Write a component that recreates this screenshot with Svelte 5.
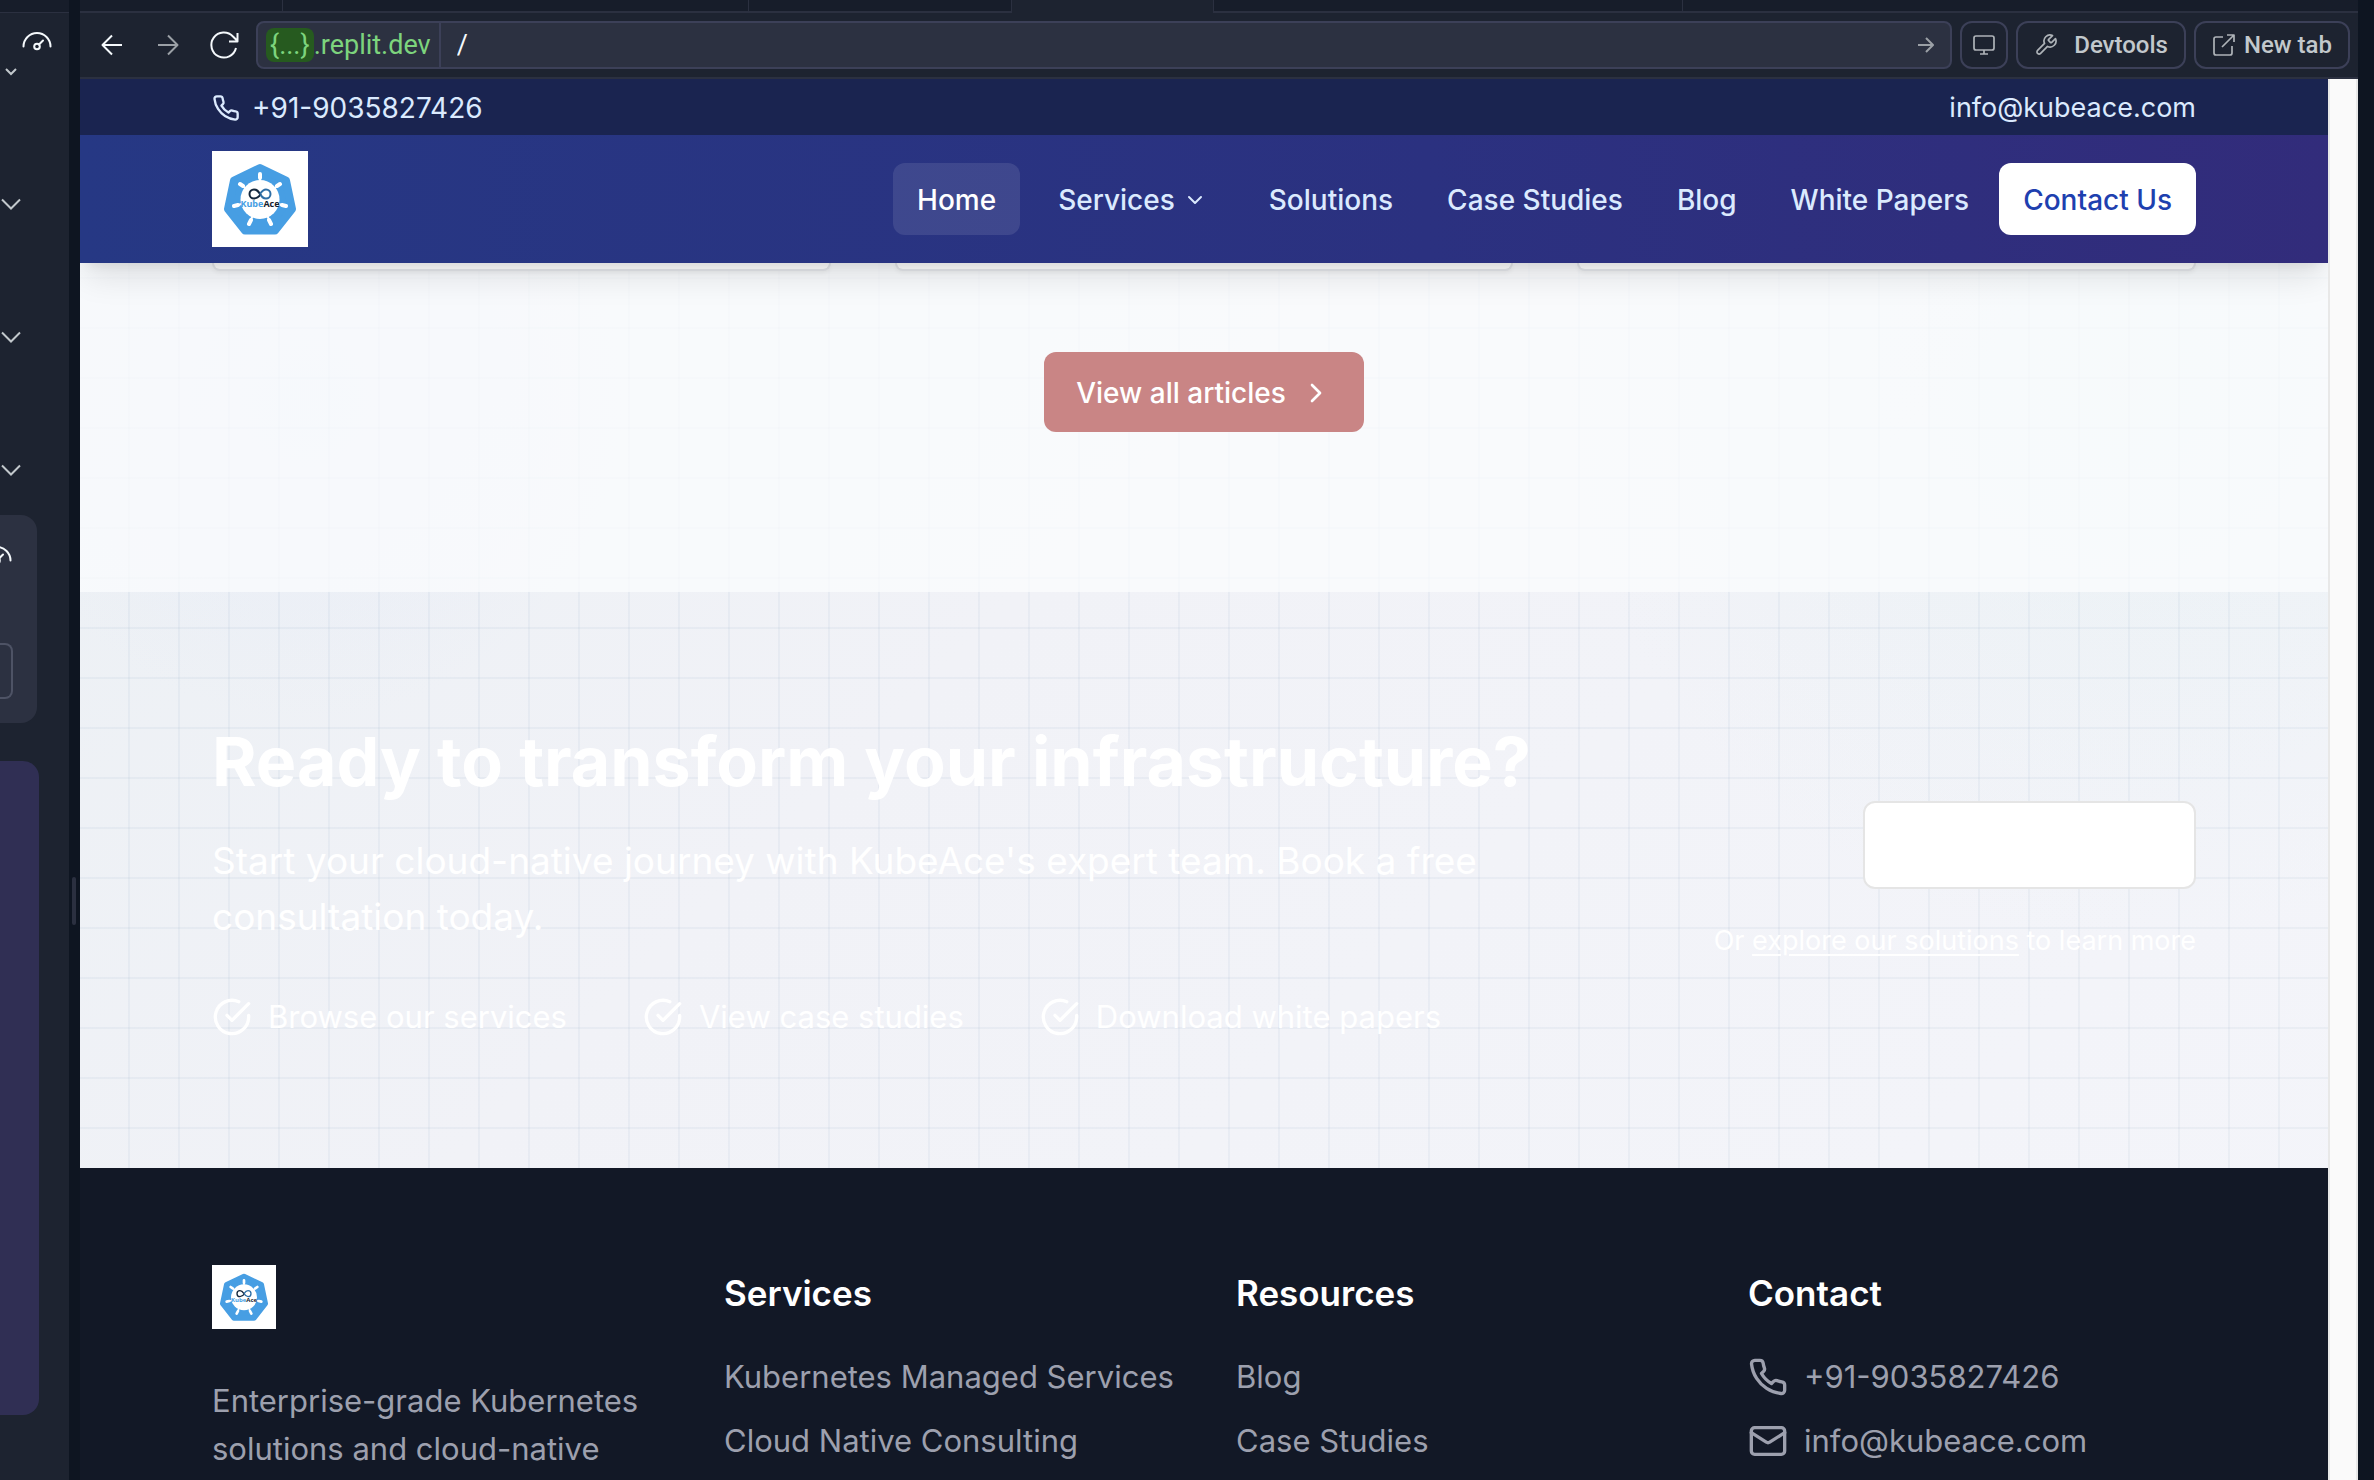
<script>
  const articleCards = ['first', 'second', 'third'];
  const benefits = ['Browse our services', 'View case studies', 'Download white papers'];
  const serviceLinks = ['Kubernetes Managed Services', 'Cloud Native Consulting'];
  const resourceLinks = ['Blog', 'Case Studies'];
</script>

{#snippet logo()}
  <svg viewBox="0 0 96 96" role="img" aria-label="KubeAce">
    <rect width="96" height="96" fill="#fff" />
    <path d="M48 17 74 29.500 80 58 63 79.500H33L16 58 22 29.500Z" fill="#479ee3" stroke="#479ee3" stroke-width="8" stroke-linejoin="round" />
    <g stroke="#fff" stroke-width="2" stroke-linecap="round">
      <path d="M48 48V24M48 48 66 34.500M48 48 72 54.500M48 48 58 71M48 48 38 71M48 48 24 54.500M48 48 30 34.500" />
      <path d="M48 23v4M68 33l-3 2M74 55l-4-1M59 73l-2-4M37 73l2-4M22 55l4-1M28 33l3 2" stroke-width="4" />
    </g>
    <circle cx="48" cy="48.500" r="19.500" fill="#fff" />
    <path d="M49 43c-3 4-5 4.500-7 4.500a4.500 4.500 0 0 1 0-9c3 0 4 1.500 6 4.500" fill="none" stroke="#14273d" stroke-width="2" />
    <path d="M48 43c2 3 3 4.500 6 4.500a4.500 4.500 0 0 0 0-9c-2.500 0-4 1.500-6 4.500" fill="none" stroke="#2f6fa6" stroke-width="2" />
    <text x="48" y="55.500" text-anchor="middle" font-size="9" font-weight="700" font-family="'Open Sans', sans-serif"><tspan fill="#479ee3">Kube</tspan><tspan fill="#14202c">Ace</tspan></text>
  </svg>
{/snippet}

{#snippet phone()}
  <svg viewBox="0 0 24 24" class="stroke" aria-hidden="true"><path d="M22 16.920v3a2 2 0 0 1-2.180 2 19.790 19.790 0 0 1-8.630-3.070 19.500 19.500 0 0 1-6-6 19.790 19.790 0 0 1-3.070-8.670A2 2 0 0 1 4.110 2h3a2 2 0 0 1 2 1.720 12.840 12.840 0 0 0 .7 2.810 2 2 0 0 1-.45 2.110L8.090 9.910a16 16 0 0 0 6 6l1.270-1.270a2 2 0 0 1 2.110-.45 12.840 12.840 0 0 0 2.810.7A2 2 0 0 1 22 16.920z" /></svg>
{/snippet}

{#snippet gauge()}
  <svg viewBox="0 0 30 20" class="gauge" aria-hidden="true"><path d="M1.500 14.500a13.500 13.500 0 0 1 27 0M17 12.500 21 8.500" /><circle cx="15" cy="14.500" r="2.800" /></svg>
{/snippet}

{#snippet chevron()}
  <svg viewBox="0 0 20 12" class="chev" aria-hidden="true"><path d="m2 1.500 9 9 9-9" /></svg>
{/snippet}

<div class="workspace">
  <aside class="sidebar" aria-label="Assistant panel">
    <div class="side-top"></div>
    <div class="side-usage">{@render gauge()}</div>
    <button class="mini" aria-label="More"><svg viewBox="0 0 12 8" aria-hidden="true"><path d="m1 1 5 5 5-5" /></svg></button>
    <div class="side-steps">
      <button aria-label="Expand step one">{@render chevron()}</button>
      <button aria-label="Expand step two">{@render chevron()}</button>
      <button aria-label="Expand step three">{@render chevron()}</button>
    </div>
    <div class="side-card">
      <div class="side-card-icon">{@render gauge()}</div>
      <button aria-label="Preview"></button>
    </div>
    <div class="side-message"></div>
  </aside>
  <div class="gutter"><span class="handle"></span></div>

  <main class="pane">
    <div class="tabs"><span class="t1"></span><span class="t2"></span><span class="t3"></span><span class="t4 active"></span><span class="t5"></span><span class="rest"></span></div>
    <div class="browser">
      <button class="nav-btn" aria-label="Back"><svg viewBox="0 0 24 24" aria-hidden="true"><path d="M22 12H2.500M12 2.500 2.500 12 12 21.500" /></svg></button>
      <button class="nav-btn dim" aria-label="Forward"><svg viewBox="0 0 24 24" aria-hidden="true"><path d="M2 12h19.500M12 2.500 21.500 12 12 21.500" /></svg></button>
      <button class="nav-btn reload" aria-label="Reload"><svg viewBox="0 0 32 32" aria-hidden="true"><path d="M28 19a12.500 12.500 0 1 1-3-11.500l4.500 4.500M29.500 4v8.500H21" /></svg></button>
      <div class="url">
        <span class="host"><span class="pill">{'{...}'}</span>.replit.dev</span>
        <input aria-label="Path" value="/" />
        <button aria-label="Go"><svg viewBox="0 0 16 16" aria-hidden="true"><path d="M0 8h15M8 1l7 7-7 7" /></svg></button>
      </div>
      <button class="tool square" aria-label="Device size"><svg viewBox="0 0 24 24" aria-hidden="true"><rect x="2" y="3" width="20" height="14" rx="2" /><path d="M12 17v4M8 21h8" /></svg></button>
      <button class="tool dev"><svg viewBox="0 0 24 24" aria-hidden="true"><path d="M14.700 6.300a1 1 0 0 0 0 1.400l1.600 1.600a1 1 0 0 0 1.400 0l3.770-3.770a6 6 0 0 1-7.940 7.940l-6.910 6.910a2.120 2.120 0 0 1-3-3l6.910-6.910a6 6 0 0 1 7.940-7.940l-3.760 3.760z" /></svg>Devtools</button>
      <button class="tool newtab"><svg viewBox="0 0 24 24" aria-hidden="true"><path d="M20 13v7a2 2 0 0 1-2 2H4a2 2 0 0 1-2-2V6a2 2 0 0 1 2-2h7M15 2h7v7M22 2 10 14" /></svg>New tab</button>
    </div>

    <div class="frame">
      <div class="site">
        <header>
          <div class="topbar">
            <a href="#phone">{@render phone()}+91-9035827426</a>
            <a class="mail" href="#mail">info@kubeace.com</a>
          </div>
          <div class="navbar">
            <a class="brand" href="#home">{@render logo()}</a>
            <nav aria-label="Main">
              <a class="current" href="#home">Home</a>
              <button class="menu">Services<svg viewBox="0 0 24 24" class="stroke" aria-hidden="true"><path d="m6 9 6 6 6-6" /></svg></button>
              <a href="#solutions">Solutions</a>
              <a href="#case-studies">Case Studies</a>
              <a href="#blog">Blog</a>
              <a href="#white-papers">White Papers</a>
            </nav>
            <a class="contact" href="#contact">Contact Us</a>
          </div>
        </header>

        <section class="articles">
          <div class="cards">
            {#each articleCards as card (card)}<div class="card"></div>{/each}
          </div>
          <button class="view-all">View all articles<svg viewBox="0 0 24 24" class="stroke" aria-hidden="true"><path d="m9 18 6-6-6-6" /></svg></button>
        </section>

        <section class="cta">
          <div class="pitch">
            <h2>Ready to transform your infrastructure?</h2>
            <p>Start your cloud-native journey with KubeAce's expert team. Book a free consultation today.</p>
            <ul>
              {#each benefits as benefit (benefit)}
                <li><svg viewBox="0 0 24 24" class="stroke" aria-hidden="true"><path d="M22 11.080V12a10 10 0 1 1-5.930-9.140" /><path d="m9 11 3 3L22 4" /></svg>{benefit}</li>
              {/each}
            </ul>
          </div>
          <div class="action">
            <button aria-label="Book a free consultation"></button>
            <p>Or <a href="#solutions">explore our solutions</a> to learn more</p>
          </div>
        </section>

        <footer>
          <div>
            <a class="foot-logo" href="#home">{@render logo()}</a>
            <p>Enterprise-grade Kubernetes solutions and cloud-native</p>
          </div>
          <div>
            <h3>Services</h3>
            <ul>{#each serviceLinks as link (link)}<li><a href="#services">{link}</a></li>{/each}</ul>
          </div>
          <div>
            <h3>Resources</h3>
            <ul>{#each resourceLinks as link (link)}<li><a href="#resources">{link}</a></li>{/each}</ul>
          </div>
          <div>
            <h3>Contact</h3>
            <ul>
              <li><a href="#phone">{@render phone()}+91-9035827426</a></li>
              <li><a href="#mail"><svg viewBox="0 0 24 24" class="stroke" aria-hidden="true"><rect x="2" y="4" width="20" height="16" rx="2" /><path d="m22 7-8.970 5.700a1.940 1.940 0 0 1-2.060 0L2 7" /></svg>info@kubeace.com</a></li>
            </ul>
          </div>
        </footer>
      </div>
      <div class="scrollbar"></div>
    </div>
  </main>
  <div class="gutter"></div>
</div>

<style>
  :global(body) { background: #0e1521; }
  .workspace, .workspace * { box-sizing: border-box; }
  .workspace {
    display: grid;
    grid-template-columns: 69px 11px minmax(0, 1fr) 16px;
    height: 100vh;
    overflow: hidden;
    background: #0e1521;
    font-family: Inter, "Liberation Sans", sans-serif;
  }
  button, input { font: inherit; color: inherit; border: 0; background: none; padding: 0; margin: 0; }
  a { color: inherit; text-decoration: none; }
  ul { list-style: none; margin: 0; padding: 0; }
  h2, h3, p { margin: 0; }
  svg { display: block; fill: none; stroke: none; flex: none; }
  .stroke { stroke: currentColor; stroke-width: 2; stroke-linecap: round; stroke-linejoin: round; }

  /* sidebar */
  .sidebar { display: flex; flex-direction: column; overflow: hidden; background: #1d2330; color: #c2c8cc; }
  .side-top { height: 13px; flex: none; background: #171d2a; border-bottom: 1px solid #2b3040; }
  .side-usage { display: flex; justify-content: flex-end; padding: 19px 17px 0 0; }
  .gauge { width: 30px; height: 20px; stroke: #f5f9fc; stroke-width: 2; stroke-linecap: round; }
  .mini { width: 12px; height: 8px; margin: 16px 0 0 5px; }
  .mini svg { width: 12px; height: 8px; stroke: currentColor; stroke-width: 2; }
  .side-steps { display: flex; flex-direction: column; gap: 121px; padding-top: 122px; }
  .side-steps button { width: 22px; height: 12px; }
  .chev { width: 20px; height: 12px; stroke: currentColor; stroke-width: 2; overflow: visible; }
  .side-card { width: 37px; height: 208px; margin-top: 39px; flex: none; border-radius: 0 16px 16px 0; background: #2c3141; padding-top: 31px; }
  .side-card-icon { display: flex; justify-content: flex-end; width: 12px; }
  .side-card button { display: block; width: 13px; height: 56px; margin-top: 77px; border: 2px solid #4e5365; border-left: 0; border-radius: 0 8px 8px 0; }
  .side-message { width: 39px; height: 654px; margin-top: 38px; flex: none; border-radius: 0 16px 16px 0; background: #302f54; }
  .gutter { display: flex; align-items: center; padding: 322px 0 0 3px; }
  .handle { width: 4px; height: 48px; border-radius: 2px; background: #2b3040; }

  /* browser chrome */
  .pane { display: flex; flex-direction: column; min-width: 0; min-height: 0; }
  .tabs { display: flex; height: 13px; flex: none; background: #171d2a; }
  .tabs span { border: solid #2b3040; border-width: 0 1px 2px 0; }
  .tabs .t1 { width: 203px; }
  .tabs .t2 { width: 466px; }
  .tabs .t3 { width: 263px; }
  .tabs .t4 { width: 202px; }
  .tabs .t5 { width: 469px; }
  .tabs .active { background: #1d2330; border-bottom: 0; }
  .tabs .rest { flex: 1; border-right: 0; }
  .browser {
    display: flex; align-items: center; gap: 8px; height: 66px; flex: none; padding: 0 8px 0 0;
    background: #1d2330; border-bottom: 2px solid #2b3040;
    font-family: Roboto, "Liberation Sans", sans-serif; font-size: 24px; line-height: 32px; color: #c2c8cc;
  }
  .nav-btn { display: grid; place-items: center; width: 48px; height: 48px; margin-left: 8px; color: #f5f9fc; }
  .browser svg { stroke: currentColor; stroke-width: 2; stroke-linejoin: round; }
  .nav-btn svg { width: 24px; height: 24px; }
  .nav-btn.dim { color: #9ba0a6; margin-left: 0; }
  .nav-btn.reload { margin-left: 0; }
  .nav-btn.reload svg { width: 32px; height: 32px; }
  .url { display: flex; align-items: center; flex: 1; min-width: 0; height: 48px; border: 2px solid #3c4058; border-radius: 8px; background: #2c3141; font-size: 27px; }
  .host { display: flex; align-items: center; height: 44px; padding: 0 8px; border-right: 2px solid #3c4058; color: #7dd47d; }
  .pill { padding: 1px 4px; border-radius: 8px; background: #265a1f; }
  .url input { flex: 1; min-width: 0; padding-left: 16px; color: #f5f9fc; outline: 0; }
  .url button { padding: 0 16px; color: #9ba0a6; }
  .url button svg { width: 16px; height: 16px; }
  .tool { display: flex; align-items: center; justify-content: center; height: 48px; padding: 0 16px; border: 2px solid #3c4058; border-radius: 12px; font-weight: 500; }
  .browser .tool svg { width: 24px; height: 24px; stroke: #aeb3b8; stroke-width: 1.7; }
  .tool.square { width: 48px; padding: 0; }
  .tool.dev { gap: 16px; }
  .tool.newtab { gap: 8px; }

  /* site */
  .frame { display: flex; flex: 1; min-height: 0; overflow: hidden; }
  .scrollbar { width: 30px; flex: none; background: #fafafa; border: solid #e8e8e8; border-width: 0 2px; }
  .site {
    flex: 1; min-width: 0; overflow: hidden;
    background:
      linear-gradient(90deg, transparent 48px, rgb(120 150 180 / 8%) 48px) 0 0 / 50px 50px,
      linear-gradient(transparent 48px, rgb(120 150 180 / 8%) 48px) 0 0 / 50px 50px,
      radial-gradient(circle 560px at 91% 300px, rgb(216 236 236 / 30%), transparent),
      radial-gradient(circle 320px at 10% 320px, rgb(220 228 250 / 30%), transparent),
      linear-gradient(135deg, #ebf0f4, #f1f2f7 40%, #f4f5fa);
  }
  header { position: relative; z-index: 1; box-shadow: 0 20px 30px -6px rgb(0 0 0 / 10%), 0 8px 12px -8px rgb(0 0 0 / 10%); }
  .topbar, .navbar { display: flex; align-items: center; padding: 0 132px; font-size: 28px; line-height: 40px; color: #dbeafe; }
  .topbar { justify-content: space-between; height: 56px; padding-top: 2px; background: #1a2450; }
  .topbar a { display: flex; align-items: center; gap: 12px; }
  .topbar .mail { font-size: 27px; }
  .topbar svg { width: 28px; height: 28px; }
  .navbar { height: 128px; background: linear-gradient(90deg, #263884, #2b3180 60%, #322c7b); font-weight: 500; }
  .brand { width: 96px; margin-right: auto; }
  nav { display: flex; gap: 6px; margin-right: 6px; }
  nav a, nav button, .contact { display: flex; align-items: center; height: 72px; padding: 2px 24px 0; border-radius: 12px; white-space: nowrap; }
  nav .menu { padding: 2px 32px 0; gap: 8px; }
  .menu svg { width: 24px; height: 24px; }
  .current { background: rgb(255 255 255 / 10%); color: #fff; }
  .contact { background: #fff; color: #1e40af; }
  .articles { display: flex; flex-direction: column; align-items: center; gap: 81px; padding: 0 132px 160px; background: rgb(251 252 254 / 75%); }
  .cards { display: grid; grid-template-columns: repeat(3, 1fr); gap: 64px; align-self: stretch; }
  .card { height: 8px; border: 2px solid #e5e7eb; border-top: 0; border-radius: 0 0 16px 16px; background: #fff; box-shadow: 0 2px 4px rgb(0 0 0 / 5%); }
  .view-all { display: flex; align-items: center; gap: 14px; height: 80px; padding: 2px 32px 0; border-radius: 12px; background: #c98585; color: #fff; font-size: 28px; font-weight: 500; line-height: 40px; }
  .view-all svg { width: 32px; height: 32px; }

  .cta { display: flex; align-items: center; justify-content: space-between; padding: 129px 132px 127px; color: #fff; }
  .pitch { max-width: 1328px; }
  h2 { font-size: 68px; line-height: 80px; font-weight: 700; white-space: nowrap; }
  .pitch p { margin-top: 32px; font-size: 37px; line-height: 56px; }
  .pitch ul { display: flex; gap: 76px; margin-top: 48px; }
  .pitch li { display: flex; align-items: center; gap: 16px; font-size: 31px; line-height: 48px; }
  .pitch svg { width: 40px; height: 40px; }
  .action { display: flex; flex-direction: column; align-items: flex-end; gap: 32px; font-size: 27px; line-height: 40px; white-space: nowrap; }
  .action button { width: 333px; height: 88px; border: 2px solid #e5e5e5; border-radius: 12px; background: #fff; }
  .action a { text-decoration: underline; text-underline-offset: 4px; }

  footer { display: grid; grid-template-columns: repeat(4, minmax(0, 1fr)); gap: 64px; padding: 97px 132px; background: #121826; color: #9da0ae; font-size: 31px; line-height: 48px; }
  .foot-logo { display: block; width: 64px; margin-bottom: 48px; }
  h3 { margin-bottom: 32px; color: #fff; font-size: 35px; line-height: 56px; font-weight: 600; }
  footer ul { display: flex; flex-direction: column; gap: 16px; white-space: nowrap; }
  footer li a { display: flex; align-items: center; gap: 16px; }
  footer li svg { width: 40px; height: 40px; }
</style>
